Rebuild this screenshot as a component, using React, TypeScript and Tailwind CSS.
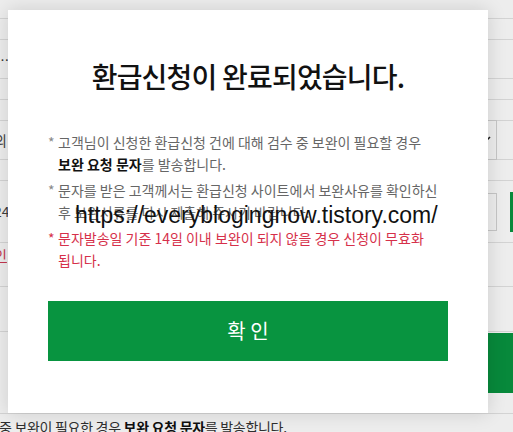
import React from "react";

const kr = { fontFamily: '"Noto Sans CJK KR", "Noto Sans", sans-serif' };

export default function App() {
  return (
    <div className="relative w-[513px] h-[432px] overflow-hidden bg-white" style={kr}>
      {/* background page */}
      <div className="flex flex-col w-full">
        <div className="h-[19px] border-b border-[#e3e3e3]" />
        <div className="h-[21px] border-b border-[#e3e3e3]" />
        <div className="h-[39px] border-b border-[#e3e3e3] flex items-center">
          <span className="text-[13px] text-[#333] ml-[-4px] leading-none">…</span>
        </div>
        <div className="h-[21px] border-b border-[#e3e3e3]" />
        <div className="h-[21px] border-b border-[#e3e3e3]" />
        <div className="h-[39px] border-b border-[#e3e3e3] flex items-center justify-between">
          <span className="text-[14px] text-[#444] ml-[-6px]">의</span>
          <div className="w-[60px] h-[40px] border border-[#d4d4d4] mr-[16px] flex items-center justify-end pr-[4px]">
            <svg width="8" height="8" viewBox="0 0 8 8"><path d="M1 6 L6 1" stroke="#222" strokeWidth="1.6" /></svg>
          </div>
        </div>
        <div className="h-[21px] border-b border-[#e3e3e3]" />
        <div className="h-[62px] border-b border-[#e3e3e3] flex items-center justify-between">
          <span className="text-[14px] text-[#444] ml-[-6px]">24</span>
          <div className="flex items-center gap-[13px]">
            <div className="w-[60px] h-[38px] border border-[#d4d4d4]" />
            <div className="w-[3px] h-[40px] bg-[#089440]" />
          </div>
        </div>
        <div className="h-[44px] border-b border-[#e3e3e3] flex items-start">
          <span className="text-[14px] text-[#d23a55] underline ml-[-6px] mt-[2px]">인</span>
        </div>
        <div className="h-[45px] border-b border-[#e3e3e3]" />
        <div className="h-[62px] flex justify-end items-center">
          <div className="w-[30px] h-[60px] bg-[#089440]" />
        </div>
        <div className="h-[20px] border-b border-[#e3e3e3]" />
        <div className="mt-[3px] text-[14px] leading-[20px] text-[#333] whitespace-nowrap tracking-[-0.3px] ml-[-1px]">
          중 보완이 필요한 경우 <b className="text-[#111]">보완 요청 문자</b>를 발송합니다.
        </div>
      </div>

      {/* dim overlay */}
      <div className="absolute inset-0 bg-black/[0.07]" />

      {/* modal */}
      <div className="absolute left-[8px] top-[10px] w-[480px] h-[403px] bg-white shadow-[0_0_18px_rgba(0,0,0,0.14)] flex flex-col items-center pt-[47px]">
        <h1 className="text-[28px] leading-[38px] font-medium text-[#111] tracking-[-0.8px]">환급신청이 완료되었습니다.</h1>
        <div className="mt-[36px] w-[400px] text-[14px] leading-[22px] flex flex-col gap-[4px] relative">
          <div className="flex text-[#666]">
            <span className="w-[10px] shrink-0 text-[#888]">*</span>
            <span className="whitespace-nowrap">
              고객님이 신청한 환급신청 건에 대해 검수 중 보완이 필요할 경우
              <br />
              <b className="text-[#111] font-bold">보완 요청 문자</b>를 발송합니다.
            </span>
          </div>
          <div className="flex text-[#666]">
            <span className="w-[10px] shrink-0 text-[#888]">*</span>
            <span className="whitespace-nowrap">
              문자를 받은 고객께서는 환급신청 사이트에서 보완사유를 확인하신
              <br />
              후 보완서류를 다시 제출해 주시기 바랍니다.
            </span>
          </div>
          <div className="flex text-[#d6304a]">
            <span className="w-[10px] shrink-0">*</span>
            <span className="whitespace-nowrap">
              문자발송일 기준 14일 이내 보완이 되지 않을 경우 신청이 무효화
              <br />
              됩니다.
            </span>
          </div>
        </div>
        <button className="mt-[30px] w-[400px] h-[60px] bg-[#089440] text-white text-[20px]">확 인</button>
      </div>

      {/* watermark */}
      <div
        className="absolute left-[75px] top-[201px] text-[23px] leading-[28px] text-[#111] whitespace-nowrap"
        style={{ fontFamily: '"Liberation Sans", Arial, sans-serif' }}
      >
        https://everyblogingnow.tistory.com/
      </div>
    </div>
  );
}
